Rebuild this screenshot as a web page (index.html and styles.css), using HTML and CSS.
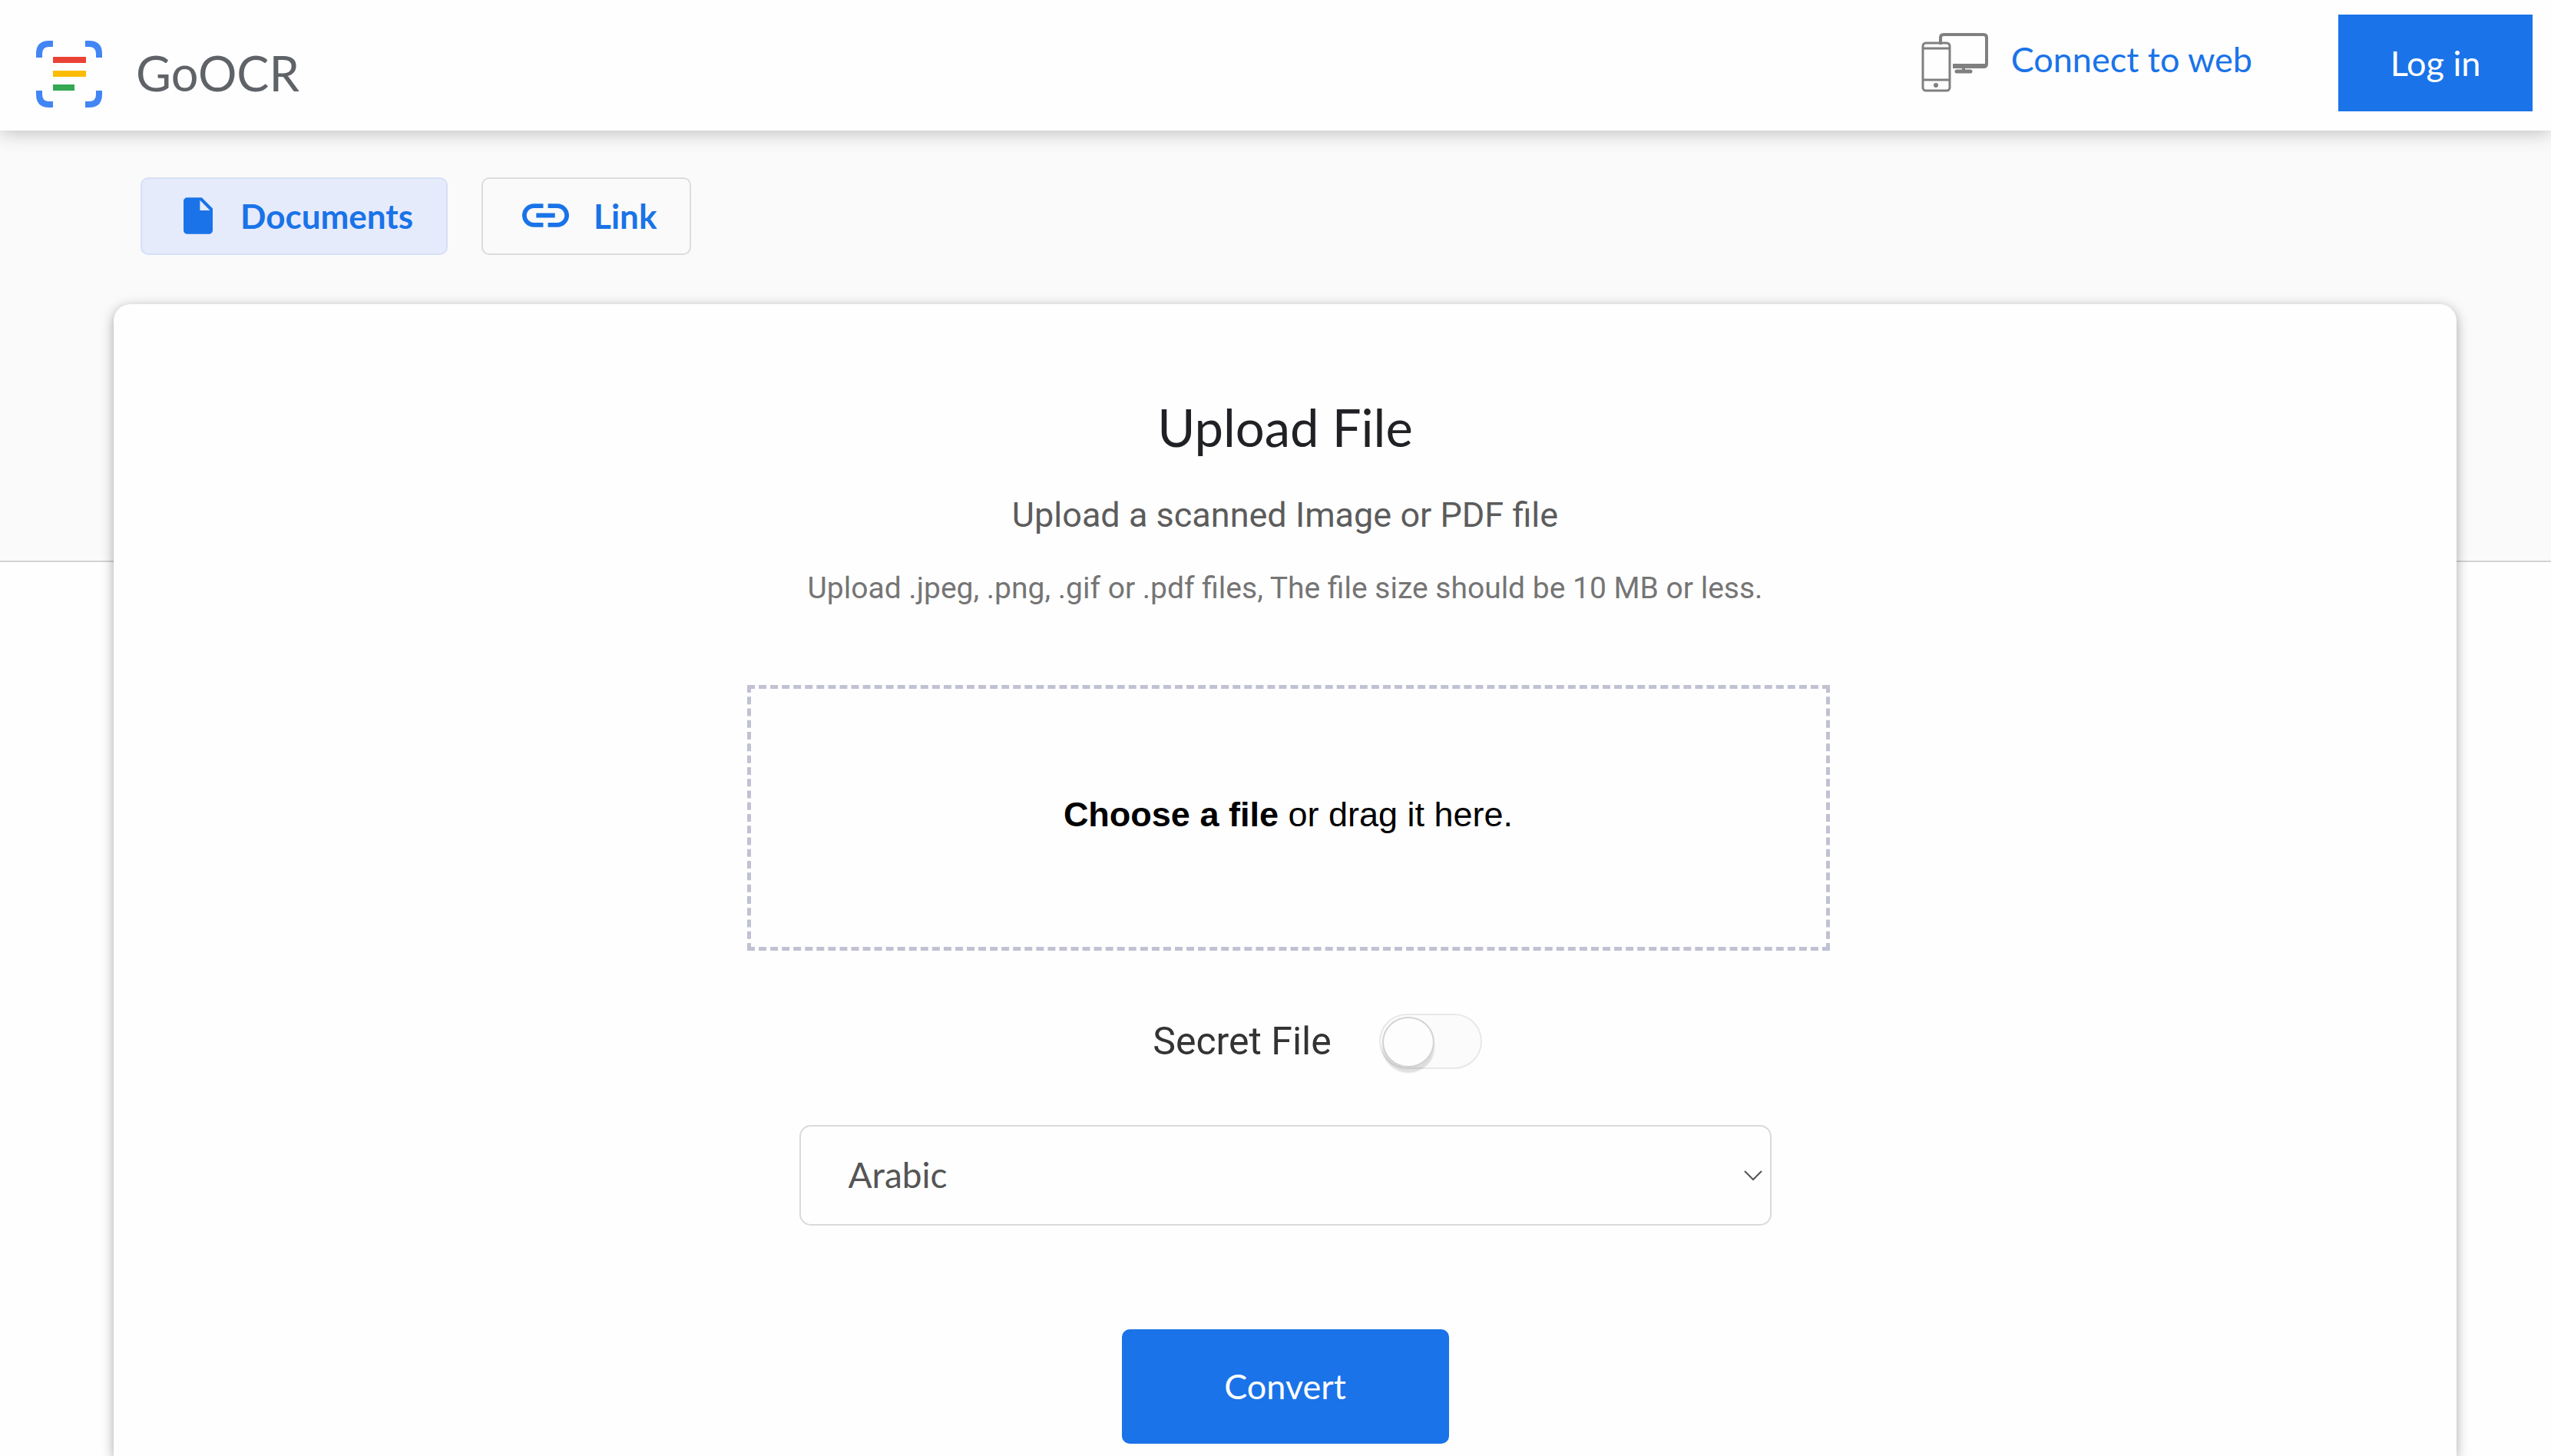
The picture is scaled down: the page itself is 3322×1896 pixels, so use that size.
FILE: index.html
```html
<!DOCTYPE html>
<html lang="en">
<head>
<meta charset="utf-8">
<meta name="viewport" content="width=device-width, initial-scale=1">
<title>GoOCR</title>
<link rel="stylesheet" href="styles.css">
</head>
<body>
<header class="topbar">
  <a class="brand" href="#">
    <svg class="brand-mark" viewBox="0 0 86 87" aria-hidden="true">
      <g fill="none" stroke="#4285f4" stroke-width="8">
        <path d="M4 22V17Q4 4 17 4H22M64 4H69Q82 4 82 17V22M82 65V70Q82 83 69 83H64M22 83H17Q4 83 4 70V65"/>
      </g>
      <path fill="#ea4335" d="M22 21h43v8H22z"/>
      <path fill="#fbbc05" d="M22 39h43v8H22z"/>
      <path fill="#34a853" d="M22 57h28v8H22z"/>
    </svg>
    <span class="brand-name">GoOCR</span>
  </a>
  <nav class="actions">
    <a class="connect" href="#">
      <svg class="devices" viewBox="0 0 87 77" fill="none" stroke="#808080" stroke-width="4" aria-hidden="true">
        <path d="M25 15V6Q25 2 29 2H81Q85 2 85 6V40Q85 44 81 44H41M41 42H84"/>
        <path d="M55 44V49"/>
        <path d="M46 50H64" stroke-linecap="round" stroke-width="5"/>
        <rect x="2" y="13" width="35" height="62" rx="4" stroke-width="3"/>
        <path d="M2 20H37M2 61H37" stroke-width="3"/>
        <circle cx="19" cy="68" r="3" fill="#808080" stroke="none"/>
      </svg>
      <span>Connect to web</span>
    </a>
    <button class="button login" type="button">Log in</button>
  </nav>
</header>

<main class="page">
  <div class="tabs">
    <button class="tab tab-active" type="button">
      <svg class="icon-doc" viewBox="4 2 16 20" aria-hidden="true"><path fill="#1a73e8" d="M6 2c-1.100 0-2 .9-2 2v16c0 1.100.9 2 2 2h12c1.100 0 2-.9 2-2V8l-6-6H6zm7 7V3.500L18.500 9H13z"/></svg>
      <span>Documents</span>
    </button>
    <button class="tab" type="button">
      <svg class="icon-link" viewBox="2 7 20 10" aria-hidden="true"><path fill="#1a73e8" d="M3.900 12c0-1.710 1.390-3.100 3.100-3.100h4V7H7c-2.760 0-5 2.240-5 5s2.240 5 5 5h4v-1.900H7c-1.710 0-3.100-1.390-3.100-3.100zM8 13h8v-2H8v2zm9-6h-4v1.900h4c1.710 0 3.100 1.390 3.100 3.100s-1.390 3.100-3.100 3.100h-4V17h4c2.760 0 5-2.240 5-5s-2.240-5-5-5z"/></svg>
      <span>Link</span>
    </button>
  </div>

  <form class="card">
    <h1 class="title">Upload File</h1>
    <p class="lead">Upload a scanned Image or PDF file</p>
    <p class="hint">Upload .jpeg, .png, .gif or .pdf files, The file size should be 10 MB or less.</p>

    <label class="dropzone" for="file">
      <input class="file-input" id="file" type="file">
      <span><strong>Choose a file</strong> or drag it here.</span>
    </label>

    <div class="secret">
      <label for="secret">Secret File</label>
      <input class="switch" id="secret" type="checkbox">
    </div>

    <div class="language">
      <select class="select" aria-label="Language">
        <option>Arabic</option>
        <option>English</option>
      </select>
      <svg class="chevron" viewBox="0 0 24 14" fill="none" stroke="#555" stroke-width="2" aria-hidden="true"><path d="M1 1L12 12L23 1"/></svg>
    </div>

    <button class="button convert" type="submit">Convert</button>
  </form>
</main>
</body>
</html>
```

FILE: styles.css
```css
* {
  box-sizing: border-box;
}

body {
  margin: 0;
  background: #fefefe;
  font-family: Roboto, "Liberation Sans", sans-serif;
}

h1,
p {
  margin: 0;
}

svg {
  display: block;
  flex: none;
}

a {
  color: inherit;
  text-decoration: none;
}

/* Header */
.topbar {
  position: relative;
  z-index: 1;
  display: flex;
  justify-content: space-between;
  align-items: flex-start;
  height: 170px;
  padding: 19px 24px 0 47px;
  background: #fefefe;
  box-shadow: 0 2px 24px rgba(0, 0, 0, 0.25);
}

.brand {
  display: flex;
  align-items: flex-start;
  gap: 44px;
  margin-top: 34px;
  color: #5f6368;
}

.brand-mark {
  width: 86px;
  height: 87px;
}

.brand-name {
  font: 63px/84px Lato, sans-serif;
}

.actions {
  display: flex;
  align-items: flex-start;
  gap: 112px;
}

.connect {
  display: flex;
  align-items: flex-start;
  gap: 30px;
  margin-top: 24px;
  color: #1a73e8;
  font: 45px/68px Lato, sans-serif;
}

.devices {
  width: 87px;
  height: 77px;
}

.button {
  padding: 0;
  border: 0;
  background: #1a73e8;
  color: #fff;
  font: 45px/48px Lato, sans-serif;
}

.login {
  width: 253px;
  height: 126px;
}

/* Page body: grey band behind the top of the card */
.page {
  padding: 61px 123px 0 148px;
  background: linear-gradient(#fafafa 560px, #d4d4d4 560px 562px, #fefefe 562px);
}

.tabs {
  display: flex;
  gap: 44px;
  padding-left: 35px;
}

.tab {
  display: flex;
  align-items: center;
  height: 101px;
  padding: 0 43px 2px 51px;
  border: 2px solid #dadce0;
  border-radius: 10px;
  background: transparent;
  color: #1a73e8;
  font: 700 44px/48px Lato, sans-serif;
  gap: 32px;
}

.tab-active {
  padding-left: 54px;
  border-color: #d5e0f5;
  background: #e6ebfc;
  gap: 36px;
}

.icon-doc {
  width: 38px;
  height: 48px;
}

.icon-link {
  width: 61px;
  height: 31px;
}

.card {
  display: flex;
  flex-direction: column;
  align-items: center;
  margin-top: 64px;
  padding: 114px 0 16px;
  border-radius: 22px 22px 0 0;
  background: #fefefe;
  box-shadow: 0 4px 16px rgba(0, 0, 0, 0.35);
}

.title {
  color: #202124;
  font: 67px/92px Lato, sans-serif;
}

.lead {
  margin-top: 41px;
  color: #5c5c5c;
  font-size: 45px;
  line-height: 56px;
}

.hint {
  margin-top: 41px;
  color: #757575;
  font-size: 39px;
  line-height: 52px;
}

.dropzone {
  display: grid;
  place-items: center;
  width: 1410px;
  max-width: 100%;
  height: 346px;
  margin: 100px 0 0 8px;
  padding-bottom: 8px;
  border: 5px dashed #c0c1d3;
  color: #000;
  font: 45px/56px "Liberation Sans", Arial, sans-serif;
}

.file-input {
  position: absolute;
  width: 1px;
  height: 1px;
  opacity: 0;
}

.secret {
  display: flex;
  align-items: center;
  gap: 62px;
  margin: 81px 0 0 84px;
  color: #333;
  font-size: 50px;
  line-height: 74px;
}

.switch {
  appearance: none;
  width: 134px;
  height: 72px;
  margin: 0;
  padding: 2px;
  border: 2px solid #e8e8e8;
  border-radius: 36px;
  background: #fbfbfb;
}

.switch::before {
  content: "";
  display: block;
  width: 64px;
  height: 62px;
  border: 2px solid #d2d2d2;
  border-radius: 50%;
  background: #fdfdfd;
  box-shadow: 0 7px 2px rgba(0, 0, 0, 0.12);
}

.language {
  display: grid;
  align-items: center;
  width: 1266px;
  max-width: 100%;
  margin-top: 72px;
}

.select {
  grid-area: 1 / 1;
  appearance: none;
  height: 131px;
  padding: 0 62px 2px;
  border: 2px solid #dadada;
  border-radius: 15px;
  background: #fefefe;
  color: #555;
  font: 46px/56px Lato, sans-serif;
}

.chevron {
  grid-area: 1 / 1;
  justify-self: end;
  width: 24px;
  height: 14px;
  margin-right: 12px;
  pointer-events: none;
}

.convert {
  width: 426px;
  height: 149px;
  margin-top: 135px;
  padding-bottom: 2px;
  border-radius: 10px;
}
```
